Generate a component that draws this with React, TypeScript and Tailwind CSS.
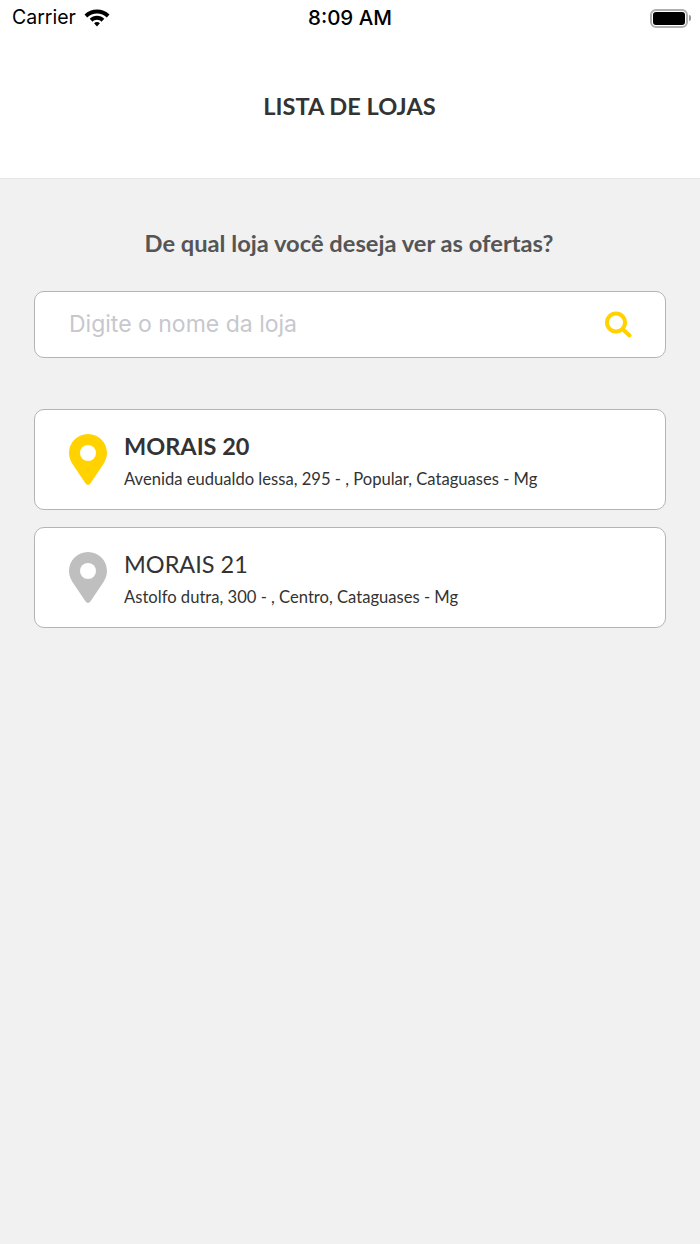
import React from "react"

const stores = [
  { name: "MORAIS 20", address: "Avenida eudualdo lessa, 295 - , Popular, Cataguases - Mg", active: true },
  { name: "MORAIS 21", address: "Astolfo dutra, 300 - , Centro, Cataguases - Mg", active: false },
]

function Pin({ color }: { color: string }) {
  return (
    <svg width="38" height="51" viewBox="0 0 38 51" className="shrink-0">
      <path
        d="M19 0C8.500 0 0 8.500 0 19c0 5.200 2.200 9.200 5 13.200L16.600 49.600c1.200 1.800 3.600 1.800 4.800 0L33 32.200c2.800-4 5-8 5-13.200C38 8.500 29.500 0 19 0z"
        fill={color}
      />
      <circle cx="19" cy="19" r="8" fill="#fff" />
    </svg>
  )
}

function StatusBar() {
  return (
    <div className="relative flex h-9 items-center justify-between pl-3 pr-[9px] text-black">
      <div className="flex items-center gap-[8px]">
        <span className="font-['Inter',sans-serif] text-[19.500px] leading-none">Carrier</span>
        <svg width="26" height="20" viewBox="0 0 26 20">
          <path d="M13 1.500C8.300 1.500 4 3.300.5 6.500l2.700 2.900C5.900 6.900 9.300 5.500 13 5.500s7.100 1.400 9.800 3.900l2.700-2.900C22 3.300 17.700 1.500 13 1.500z" fill="#000" />
          <path d="M13 7.800c-2.800 0-5.400 1.100-7.300 3l2.800 2.900c1.200-1.200 2.800-1.900 4.500-1.900s3.300.7 4.500 1.900l2.800-2.900c-1.900-1.900-4.500-3-7.300-3z" fill="#000" />
          <path d="M13 14c-1.100 0-2.100.4-2.900 1.200L13 18.400l2.900-3.200C15.100 14.400 14.100 14 13 14z" fill="#000" />
        </svg>
      </div>
      <span className="absolute left-1/2 -translate-x-1/2 font-['Inter',sans-serif] text-[20.500px] font-medium leading-none">8:09 AM</span>
      <div className="flex items-center">
        <div className="flex h-[19px] w-[38px] items-center rounded-[6px] border-2 border-[#b0b0b0] p-[1px]">
          <div className="h-full w-full rounded-[3px] bg-black" />
        </div>
        <div className="ml-[1px] h-[6px] w-[2px] rounded-r-sm bg-[#9a9a9a]" />
      </div>
    </div>
  )
}

export default function App() {
  return (
    <div className="flex min-h-[1244px] flex-col bg-[#f1f1f1] font-['Lato',sans-serif]">
      {/* Header */}
      <div className="h-[179px] border-b border-[#e6e6e6] bg-white">
        <StatusBar />
        <h1 className="pt-[55px] pr-[1px] text-center text-[23.600px] font-bold leading-[30px] text-[#333]">LISTA DE LOJAS</h1>
      </div>

      <div className="flex flex-col px-[34px]">
        <p className="mt-[48px] pr-[2px] text-center text-[23.700px] font-bold leading-[32px] text-[#555]">
          De qual loja você deseja ver as ofertas?
        </p>

        {/* Search */}
        <div className="mt-[32px] flex h-[67px] items-center justify-between rounded-[10px] border border-[#b4b4b4] bg-white pl-[34px] pr-[33px]">
          <span className="font-['Inter',sans-serif] text-[23px] text-[#c7c7cd]">Digite o nome da loja</span>
          <svg width="28" height="28" viewBox="0 0 28 28" fill="none" stroke="#ffd200" strokeWidth="4">
            <circle cx="12" cy="11.500" r="9" />
            <path d="M18.500 18l7 6.500" strokeLinecap="round" />
          </svg>
        </div>

        {/* Stores */}
        <div className="mt-[51px] flex flex-col gap-[17px]">
          {stores.map((s) => (
            <div key={s.name} className="flex h-[101px] items-center gap-[17px] rounded-[10px] border border-[#b4b4b4] bg-white pl-[34px]">
              <Pin color={s.active ? "#ffd200" : "#bfbfbf"} />
              <div className="flex flex-col pt-[1px]">
                <span className={s.active ? "text-[23.500px] font-bold leading-[34px] text-[#333]" : "text-[23.500px] leading-[34px] text-[#333]"}>{s.name}</span>
                <span className="mt-[3px] text-[16.600px] leading-[26px] text-[#333]">{s.address}</span>
              </div>
            </div>
          ))}
        </div>
      </div>
    </div>
  )
}
